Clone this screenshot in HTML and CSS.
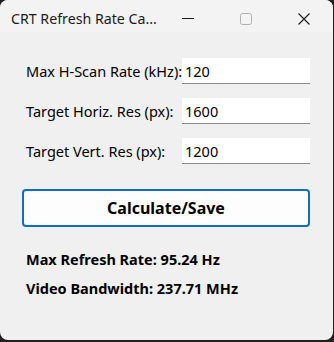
FILE: index.html
```html
<!DOCTYPE html>
<html lang="en">
<head>
  <meta charset="UTF-8" />
  <title>CRT Refresh Rate Calculator</title>
  <link rel="stylesheet" href="styles.css">
</head>
<body>
  <div class="window">
    <!-- title bar -->
    <div class="titlebar">
      <span class="title">CRT Refresh Rate Ca...</span>
      <div class="controls">
        <span class="ctl">
          <span class="min-line"></span>
        </span>
        <span class="ctl">
          <svg width="12" height="12" viewBox="0 0 12 12"><rect x="0.5" y="0.5" width="11" height="11" rx="2" fill="none" stroke="#b0b0b0" stroke-width="1"/></svg>
        </span>
        <span class="ctl">
          <svg width="12" height="12" viewBox="0 0 12 12"><path d="M0.5 0.5l11 11M11.5 0.5l-11 11" stroke="#1a1a1a" stroke-width="1.1"/></svg>
        </span>
      </div>
    </div>

    <div class="content">
      <div class="form">
        <label class="label">Max H-Scan Rate (kHz):</label>
        <input class="field" type="text" value="120">
        <label class="label">Target Horiz. Res (px):</label>
        <input class="field" type="text" value="1600">
        <label class="label">Target Vert. Res (px):</label>
        <input class="field" type="text" value="1200">
      </div>

      <button class="calc">Calculate/Save</button>

      <div class="results">
        <p class="result">Max Refresh Rate: 95.24 Hz</p>
        <p class="result">Video Bandwidth: 237.71 MHz</p>
      </div>
    </div>
  </div>
</body>
</html>
```

FILE: styles.css
```css
body {
  margin: 0;
  background-color: #1f1f1f;
  font-family: "Segoe UI", "Noto Sans", sans-serif;
  color: #000000;
}

.window {
  width: 333px;
  height: 340px;
  background-color: #f0f0f0;
  border-radius: 8px;
  overflow: hidden;
  display: flex;
  flex-direction: column;
}

.titlebar {
  height: 32px;
  background-color: #f3f3f3;
  display: flex;
  align-items: center;
  padding-left: 11px;
  flex-shrink: 0;
}

.title {
  flex: 1;
  min-width: 0;
  font-size: 14.2px;
  color: #1a1a1a;
  margin-top: 5px;
  white-space: nowrap;
}

.controls {
  display: flex;
  flex-shrink: 0;
  height: 100%;
  margin-top: 5px;
  margin-left: -10px;
}

.ctl {
  width: 58px;
  flex-shrink: 0;
  display: flex;
  align-items: center;
  justify-content: center;
}

.ctl svg {
  flex-shrink: 0;
}

.min-line {
  display: block;
  width: 12px;
  height: 1px;
  background-color: #1a1a1a;
}

.content {
  padding: 26px 23px 0 22px;
}

.form {
  display: grid;
  grid-template-columns: 160px 128px;
  row-gap: 14px;
  align-items: center;
}

.label {
  font-size: 14.5px;
  padding-left: 4px;
  white-space: nowrap;
}

.field {
  box-sizing: border-box;
  height: 26px;
  width: 128px;
  margin: 0;
  border: none;
  border-bottom: 1px solid #8c8c8c;
  background-color: #ffffff;
  font-family: inherit;
  font-size: 14.5px;
  padding: 0 3px;
  color: #000000;
  outline: none;
}

.calc {
  display: block;
  box-sizing: border-box;
  width: 288px;
  height: 38px;
  margin-top: 25px;
  background-color: #fdfdfd;
  border: 2px solid #0a6fcb;
  border-radius: 4px;
  font-family: inherit;
  font-size: 16px;
  font-weight: bold;
  color: #000000;
}

.results {
  margin-top: 22px;
  padding-left: 4px;
}

.result {
  margin: 0 0 9px;
  font-size: 14.5px;
  font-weight: bold;
}
```
